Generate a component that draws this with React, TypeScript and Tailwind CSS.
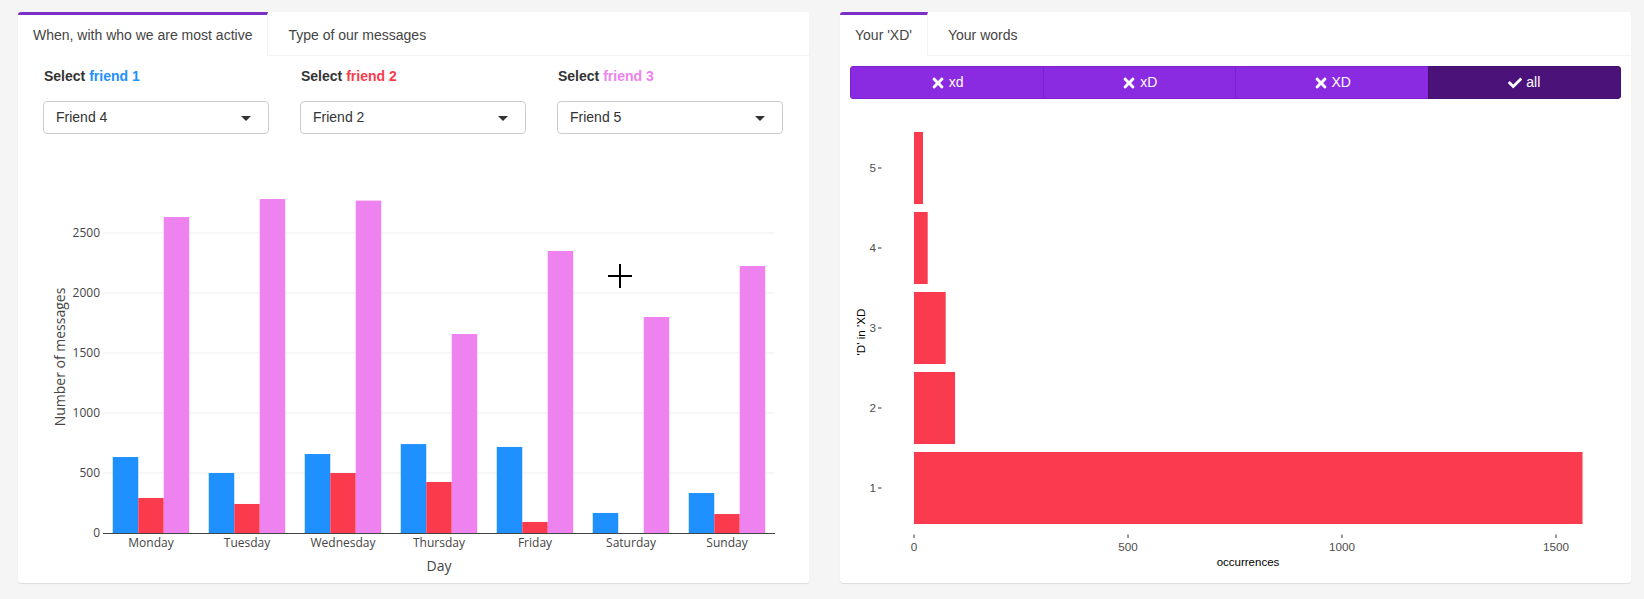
import React from 'react';
import { FaTimes, FaCheck } from 'react-icons/fa';

const days = [
  { day: 'Monday', f1: 633, f2: 292, f3: 2633 },
  { day: 'Tuesday', f1: 500, f2: 242, f3: 2783 },
  { day: 'Wednesday', f1: 658, f2: 500, f3: 2770 },
  { day: 'Thursday', f1: 741, f2: 425, f3: 1658 },
  { day: 'Friday', f1: 717, f2: 92, f3: 2350 },
  { day: 'Saturday', f1: 167, f2: 0, f3: 1800 },
  { day: 'Sunday', f1: 333, f2: 158, f3: 2225 },
];

const xdCounts = [
  { n: 1, count: 1562 },
  { n: 2, count: 96 },
  { n: 3, count: 74 },
  { n: 4, count: 32 },
  { n: 5, count: 21 },
];

const BLUE = '#1e90ff';
const RED = '#fa3b4d';
const VIOLET = '#ee82ee';

type Tab = { label: string; active?: boolean };

const TabHeader: React.FC<{ tabs: Tab[] }> = ({ tabs }) => (
  <div className="flex h-[44px] border-b border-[#f4f4f4]">
    {tabs.map(t =>
      t.active ? (
        <div
          key={t.label}
          className="h-[44px] -mb-px bg-white border-t-[3px] border-[#7c2fc4] border-r border-r-[#f4f4f4] px-[15px] pt-[10px] text-[14px] leading-[20px] text-[#444] mr-[5px]"
        >
          {t.label}
        </div>
      ) : (
        <div key={t.label} className="h-[43px] border-t-[3px] border-transparent px-[15px] pt-[10px] text-[14px] leading-[20px] text-[#444]">
          {t.label}
        </div>
      )
    )}
  </div>
);

const FriendSelect: React.FC<{ idx: number; color: string; value: string }> = ({ idx, color, value }) => (
  <div className="w-[226px]">
    <div className="pl-px text-[14px] leading-[20px] font-bold text-[#333] mb-[15px]">
      Select <span style={{ color }}>friend {idx}</span>
    </div>
    <div className="relative h-[33px] border border-[#cccccc] rounded-[4px] bg-white pl-[12px] flex items-center text-[14px] text-[#333]">
      {value}
      <span className="absolute right-[17px] top-[14px] w-0 h-0 border-x-[5px] border-x-transparent border-t-[5px] border-t-[#333]" />
    </div>
  </div>
);

// plotly-style grouped bar chart, drawn in page coordinates
const WeekChart: React.FC = () => {
  const y0 = 533;
  const k = 0.12;
  const left = 103;
  const right = 775;
  const step = 96;
  const bw = 25.5;
  return (
    <svg width={791} height={433} viewBox="18 150 791 433" className="block">
      {[500, 1000, 1500, 2000, 2500].map(v => (
        <line key={v} x1={left} x2={right} y1={y0 - v * k} y2={y0 - v * k} stroke="#eeeeee" strokeWidth={1} />
      ))}
      {days.map((d, i) => {
        const c = left + step * (i + 0.5);
        const x = c - bw * 1.5;
        return (
          <g key={d.day}>
            <rect x={x} y={y0 - d.f1 * k} width={bw} height={d.f1 * k} fill={BLUE} />
            <rect x={x + bw} y={y0 - d.f2 * k} width={bw} height={d.f2 * k} fill={RED} />
            <rect x={x + bw * 2} y={y0 - d.f3 * k} width={bw} height={d.f3 * k} fill={VIOLET} />
            <text x={c} y={547} textAnchor="middle" fontFamily="Open Sans, sans-serif" fontSize={12} fill="#444">
              {d.day}
            </text>
          </g>
        );
      })}
      <line x1={left} x2={right} y1={y0 + 0.5} y2={y0 + 0.5} stroke="#444" strokeWidth={1} />
      {[0, 500, 1000, 1500, 2000, 2500].map(v => (
        <text key={v} x={100} y={y0 - v * k + 4} textAnchor="end" fontFamily="Open Sans, sans-serif" fontSize={12} fill="#444">
          {v}
        </text>
      ))}
      <text x={439} y={571} textAnchor="middle" fontFamily="Open Sans, sans-serif" fontSize={14} fill="#444">
        Day
      </text>
      <text
        x={0}
        y={0}
        transform="translate(65 357) rotate(-90)"
        textAnchor="middle"
        fontFamily="Open Sans, sans-serif"
        fontSize={14}
        fill="#444"
      >
        Number of messages
      </text>
      {/* mouse cursor */}
      <line x1={608} x2={632} y1={276} y2={276} stroke="#000" strokeWidth={2} />
      <line x1={620} x2={620} y1={264} y2={288} stroke="#000" strokeWidth={2} />
    </svg>
  );
};

// ggplotly-style horizontal bars
const XdChart: React.FC = () => {
  const x0 = 914;
  const k = 0.428;
  return (
    <svg width={791} height={473} viewBox="840 110 791 473" className="block">
      {xdCounts.map(d => {
        const cy = 568 - d.n * 80;
        return (
          <g key={d.n}>
            <rect x={x0} y={cy - 36} width={d.count * k} height={72} fill={RED} />
            <text x={876} y={cy + 4} textAnchor="end" fontFamily="Liberation Sans, Arial, sans-serif" fontSize={11.7} fill="#4d4d4d">
              {d.n}
            </text>
            <line x1={878} x2={881.5} y1={cy} y2={cy} stroke="#333" strokeWidth={1} />
          </g>
        );
      })}
      {[0, 500, 1000, 1500].map(v => (
        <g key={v}>
          <line x1={x0 + v * k} x2={x0 + v * k} y1={534.5} y2={538} stroke="#333" strokeWidth={1} />
          <text x={x0 + v * k} y={551} textAnchor="middle" fontFamily="Liberation Sans, Arial, sans-serif" fontSize={11.7} fill="#4d4d4d">
            {v}
          </text>
        </g>
      ))}
      <text x={1248} y={566} textAnchor="middle" fontFamily="Liberation Sans, Arial, sans-serif" fontSize={11.5} fill="#000">
        occurrences
      </text>
      <text
        x={0}
        y={0}
        transform="translate(865 332) rotate(-90)"
        textAnchor="middle"
        fontFamily="Liberation Sans, Arial, sans-serif"
        fontSize={11.7}
        fill="#000"
      >
        'D' in 'XD
      </text>
    </svg>
  );
};

const FilterButton: React.FC<{ label: string; active?: boolean }> = ({ label, active }) => (
  <div
    className={
      active
        ? 'flex-1 flex items-center justify-center gap-[4px] bg-[#4b137a] border border-[#43106e] text-white text-[14px]'
        : 'flex-1 flex items-center justify-center gap-[3px] bg-[#8a2be2] border border-[#7a20cc] -mr-px text-white text-[14px]'
    }
  >
    {active ? <FaCheck size={14} /> : <FaTimes size={16} />}
    <span>{label}</span>
  </div>
);

const App: React.FC = () => {
  return (
    <div className="min-h-screen bg-[#f5f5f5] pt-[12px] pl-[18px] pr-[13px] flex gap-[31px] font-['Liberation_Sans',Arial,sans-serif]">
      {/* Left box */}
      <div className="w-[791px] h-[571px] bg-white rounded-[3px] shadow-[0_1px_1px_rgba(0,0,0,0.1)] overflow-hidden">
        <TabHeader tabs={[{ label: 'When, with who we are most active', active: true }, { label: 'Type of our messages' }]} />
        <div className="pl-[25px] pt-[10px] flex gap-[31px]">
          <FriendSelect idx={1} color={BLUE} value="Friend 4" />
          <FriendSelect idx={2} color={RED} value="Friend 2" />
          <FriendSelect idx={3} color={VIOLET} value="Friend 5" />
        </div>
        <div className="mt-[16px]">
          <WeekChart />
        </div>
      </div>

      {/* Right box */}
      <div className="w-[791px] h-[571px] bg-white rounded-[3px] shadow-[0_1px_1px_rgba(0,0,0,0.1)] overflow-hidden">
        <TabHeader tabs={[{ label: "Your 'XD'", active: true }, { label: 'Your words' }]} />
        <div className="p-[10px] pb-0">
          <div className="flex h-[33px] rounded-[4px] overflow-hidden">
            <FilterButton label="xd" />
            <FilterButton label="xD" />
            <FilterButton label="XD" />
            <FilterButton label="all" active />
          </div>
        </div>
        <div className="mt-[11px]">
          <XdChart />
        </div>
      </div>
    </div>
  );
};

export default App;
